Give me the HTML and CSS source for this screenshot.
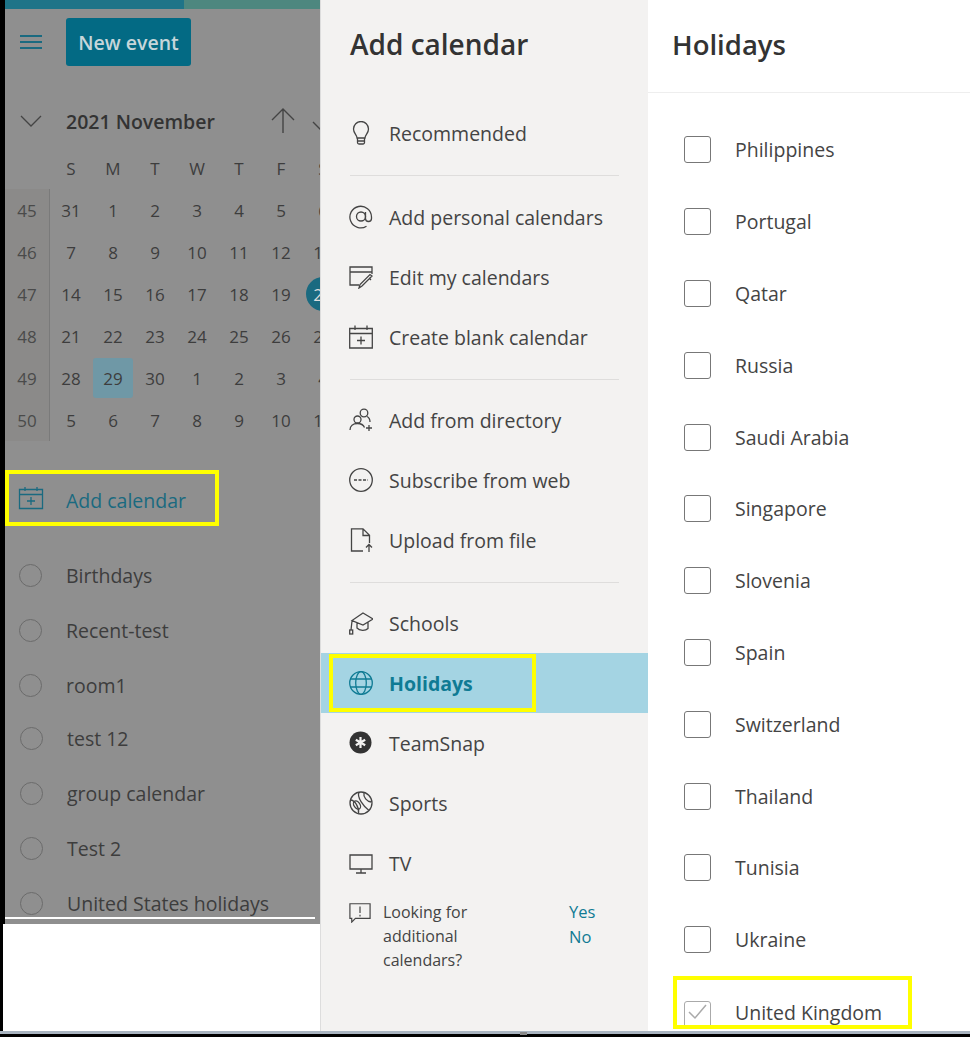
FILE: index.html
```html
<!DOCTYPE html>
<html lang="en">
<head>
    <meta charset="UTF-8">
    <title>Add calendar</title>
    <link rel="stylesheet" href="styles.css">
</head>
<body>
    <div class="window">
        <!-- left: dimmed calendar sidebar -->
        <div class="left">
            <div class="sidebar">
                <div class="topbar"><span class="topbar-a"></span><span class="topbar-b"></span></div>
                <div class="actions">
                    <svg class="burger" width="22" height="16" viewBox="0 0 22 16"><path d="M0 2h22M0 8h22M0 14h22" stroke="#1a6a80" stroke-width="2" fill="none"/></svg>
                    <button class="new-event">New event</button>
                </div>
                <div class="month-row">
                    <svg class="month-chev" width="22" height="12" viewBox="0 0 22 12"><path d="M1 1l10 10L21 1" stroke="#444" stroke-width="1.3" fill="none"/></svg>
                    <span class="month-name">2021 November</span>
                    <svg class="month-up" width="24" height="26" viewBox="0 0 24 26"><path d="M12 25V1M1 12L12 1l11 11" stroke="#444" stroke-width="1.4" fill="none"/></svg>
                    <svg class="month-down" width="24" height="26" viewBox="0 0 24 26"><path d="M12 1v24M1 14l11 11 11-11" stroke="#444" stroke-width="1.4" fill="none"/></svg>
                </div>
                <div class="cal-grid">
                    <span></span><b>S</b><b>M</b><b>T</b><b>W</b><b>T</b><b>F</b><b>S</b>
                    <i>45</i><span>31</span><span>1</span><span>2</span><span>3</span><span>4</span><span>5</span><span>6</span>
                    <i>46</i><span>7</span><span>8</span><span>9</span><span>10</span><span>11</span><span>12</span><span>13</span>
                    <i>47</i><span>14</span><span>15</span><span>16</span><span>17</span><span>18</span><span>19</span><span class="today">20</span>
                    <i>48</i><span>21</span><span>22</span><span>23</span><span>24</span><span>25</span><span>26</span><span>27</span>
                    <i>49</i><span>28</span><span class="picked">29</span><span>30</span><span>1</span><span>2</span><span>3</span><span>4</span>
                    <i>50</i><span>5</span><span>6</span><span>7</span><span>8</span><span>9</span><span>10</span><span>11</span>
                </div>
                <div class="add-cal mark">
                    <svg width="26" height="24" viewBox="0 0 26 24"><path d="M1.5 3.5h23v19h-23zM1.5 8.500h23M7 1v4M19 1v4M13 11v8M9 15h8" stroke="#1a6a80" stroke-width="1.300" fill="none"/></svg>
                    <span class="add-cal-text">Add calendar</span>
                </div>
                <div class="cal-lists">
                    <ul class="cal-list">
                        <li><span class="dot"></span>Birthdays</li>
                        <li><span class="dot"></span>Recent-test</li>
                        <li><span class="dot"></span>room1</li>
                    </ul>
                    <ul class="cal-list shifted">
                        <li><span class="dot"></span>test 12</li>
                        <li><span class="dot"></span>group calendar</li>
                        <li><span class="dot"></span>Test 2</li>
                        <li><span class="dot"></span>United States holidays</li>
                    </ul>
                </div>
            </div>
            <div class="blank"></div>
        </div>

        <!-- middle: add calendar menu -->
        <div class="menu">
            <h2 class="menu-title">Add calendar</h2>
            <div class="item">
                <svg class="ico" viewBox="0 0 24 24"><path d="M8 17c0-3-3.500-4.500-3.500-9a7.500 7.500 0 0 1 15 0c0 4.500-3.500 6-3.500 9zM8.500 17v4.500a1.500 1.500 0 0 0 1.500 1.500h4a1.500 1.500 0 0 0 1.500-1.500V17M8.500 20h7"/></svg>
                <span>Recommended</span>
            </div>
            <hr class="sep first">
            <div class="item">
                <svg class="ico" viewBox="0 0 24 24"><circle cx="12" cy="11.500" r="4.500"/><path d="M16.500 7v6.500a3 3 0 0 0 6 0V12a10.800 10.800 0 1 0-5 9.200"/></svg>
                <span>Add personal calendars</span>
            </div>
            <div class="item">
                <svg class="ico" viewBox="0 0 24 24"><path d="M10 20H1V2h22v7M1 7h22M23 11l-10 10-3 2 1-3.500 10-10zM20 13l2 2"/></svg>
                <span>Edit my calendars</span>
            </div>
            <div class="item">
                <svg class="ico" viewBox="0 0 24 24"><path d="M.700 3.500h22.600v19.500H.700zM.700 8.500h22.600M6 .5v4.500M18 .5v4.500M12 11.500v8M8 15.500h8"/></svg>
                <span>Create blank calendar</span>
            </div>
            <hr class="sep">
            <div class="item">
                <svg class="ico" viewBox="0 0 24 24"><circle cx="15" cy="5" r="3.800"/><circle cx="8.500" cy="11.500" r="3.500"/><path d="M1 22c0-4 3-6.500 7.500-6.500s6 1.500 7 4M18 8.500c2 1 3 3 3 5.500M20 17v6M17 20h6"/></svg>
                <span>Add from directory</span>
            </div>
            <div class="item">
                <svg class="ico" viewBox="0 0 24 24"><circle cx="12" cy="12" r="11.300"/><path d="M5 12h14" stroke-dasharray="3 1.500"/></svg>
                <span>Subscribe from web</span>
            </div>
            <div class="item">
                <svg class="ico" viewBox="0 0 24 24"><path d="M14 23H2.500V.8h11.500l6.500 6.500V15M14 1v6.500h6.500M20 24v-7M17 19.500l3-3 3 3"/></svg>
                <span>Upload from file</span>
            </div>
            <hr class="sep">
            <div class="item">
                <svg class="ico" viewBox="0 0 24 24"><path d="M14 2L24 8l-10 6L3 9.500zM8 12v5c2.500 3 8.500 3 11 .5V11M3 10l-1 9"/><rect x=".7" y="19" width="3" height="4"/></svg>
                <span>Schools</span>
            </div>
            <div class="item active">
                <div class="mark item-mark">
                    <svg class="ico" viewBox="0 0 24 24"><circle cx="12" cy="12" r="11.300"/><ellipse cx="12" cy="12" rx="5.300" ry="11.300"/><path d="M1 8h22M1 16h22"/></svg>
                    <span>Holidays</span>
                </div>
            </div>
            <div class="item">
                <svg class="ico" viewBox="0 0 24 24"><circle cx="11.500" cy="11.500" r="11" fill="#333" stroke="none"/><path d="M11.500 6v11M6.800 8.800l9.400 5.400M16.200 8.800l-9.400 5.400" stroke="#f3f2f1" stroke-width="2.200"/></svg>
                <span>TeamSnap</span>
            </div>
            <div class="item">
                <svg class="ico" viewBox="0 0 24 24"><circle cx="12" cy="12" r="11"/><path d="M10 1.500C7.500 6 15 16 20 19.500M15 1.500c-1 5 3 9 7 9.500M1.500 9c4 0 9 7 8 13.500"/><ellipse cx="8" cy="14" rx="3" ry="4.500" transform="rotate(-35 8 14)"/></svg>
                <span>Sports</span>
            </div>
            <div class="item">
                <svg class="ico" viewBox="0 0 24 24"><path d="M1 4h22v14H1zM12 18v4M7 22h10"/></svg>
                <span>TV</span>
            </div>
            <div class="feedback">
                <svg class="ico feedback-ico" viewBox="0 0 24 24"><path d="M1 3h22v16H7l-4 4v-4H1zM12 6v7M12 15v2"/></svg>
                <p class="feedback-text">Looking for additional calendars?</p>
                <div class="feedback-links"><a>Yes</a><a>No</a></div>
            </div>
        </div>

        <!-- right: holiday countries -->
        <div class="holidays">
            <h2 class="holidays-title">Holidays</h2>
            <ul class="country-list">
                <li><span class="box"></span>Philippines</li>
                <li><span class="box"></span>Portugal</li>
                <li><span class="box"></span>Qatar</li>
                <li><span class="box"></span>Russia</li>
                <li><span class="box"></span>Saudi Arabia</li>
                <li><span class="box"></span>Singapore</li>
                <li><span class="box"></span>Slovenia</li>
                <li><span class="box"></span>Spain</li>
                <li><span class="box"></span>Switzerland</li>
                <li><span class="box"></span>Thailand</li>
                <li><span class="box"></span>Tunisia</li>
                <li><span class="box"></span>Ukraine</li>
                <li class="mark country-mark">
                    <span class="box checked"><svg width="24" height="20" viewBox="0 0 24 20"><path d="M4 10l6 6L21 3" stroke="#aaa" stroke-width="1.500" fill="none"/></svg></span>United Kingdom
                </li>
            </ul>
        </div>
    </div>
    <div class="strip"><span class="strip-grip"></span></div>
</body>
</html>
```

FILE: styles.css
```css
:root {
    --teal: #0f7b94;
    --dim-teal: #1a6a80;
    --text: #444;
    --dim-text: #3d3d3d;
    --yellow: #ffff00;
    --menu-bg: #f3f2f1;
}
body {
    margin: 0;
    height: 1037px;
    overflow: hidden;
    background: #000;
    font-family: "Open Sans", "Noto Sans", Arial, sans-serif;
    color: var(--text);
}
ul {
    list-style: none;
    margin: 0;
    padding: 0;
}
h2 {
    margin: 0;
}
.window {
    display: flex;
    height: 1031px;
}
.strip {
    position: relative;
    height: 3px;
    background: #a9b4c0;
}
.strip-grip {
    position: absolute;
    left: 520px;
    top: 1px;
    width: 7px;
    height: 3px;
    background: #888;
}
.mark {
    border: 4px solid var(--yellow);
    box-sizing: border-box;
}

/* left column */
.left {
    width: 320px;
    flex-shrink: 0;
    display: flex;
    flex-direction: column;
    background: #000;
}
.sidebar {
    height: 924px;
    margin-left: 5px;
    background: #8f8f8f;
    overflow: hidden;
    flex-shrink: 0;
}
.blank {
    flex: 1;
    margin-left: 3px;
    background: #fff;
}
.topbar {
    display: flex;
    height: 9px;
}
.topbar-a {
    width: 179px;
    background: #1f7488;
}
.topbar-b {
    flex: 1;
    background: #4d877f;
}
.actions {
    display: flex;
    align-items: center;
    height: 66px;
    padding-left: 15px;
    box-sizing: border-box;
}
.burger {
    margin-right: 24px;
}
.new-event {
    width: 125px;
    height: 48px;
    border: none;
    border-radius: 3px;
    background: #036a84;
    color: #c6d6da;
    font: 600 19.500px "Open Sans", sans-serif;
    padding: 0;
}
.month-row {
    display: flex;
    align-items: center;
    height: 40px;
    margin-top: 26px;
    padding-left: 15px;
    white-space: nowrap;
}
.month-chev {
    margin-right: 23px;
    flex-shrink: 0;
}
.month-name {
    width: 206px;
    flex-shrink: 0;
    font-size: 19.500px;
    font-weight: 600;
    color: #333;
    padding-left: 1px;
    box-sizing: border-box;
}
.month-down {
    margin-left: 17px;
    flex-shrink: 0;
}
.month-up {
    flex-shrink: 0;
}
.cal-grid {
    display: grid;
    grid-template-columns: 45px repeat(7, 42px);
    grid-auto-rows: 42px;
    margin-top: 6px;
    font-size: 17px;
    color: var(--dim-text);
    width: 339px;
}
.cal-grid > * {
    display: flex;
    align-items: center;
    justify-content: center;
    font-style: normal;
    font-weight: 400;
}
.cal-grid i {
    background: #8b8a89;
    border-right: 1px solid #7a7a7a;
    color: #4a4a4a;
}
.cal-grid .picked {
    margin: 1px;
    background: #6f98a6;
    border-radius: 3px;
}
.cal-grid .today {
    background: var(--dim-teal);
    color: #ddd;
    border-radius: 50%;
    width: 34px;
    height: 34px;
    margin: 4px;
}
.add-cal {
    display: flex;
    align-items: center;
    width: 214px;
    height: 56px;
    margin-top: 29px;
    padding-left: 9px;
    color: var(--dim-teal);
    font-size: 19.500px;
}
.add-cal svg {
    margin-right: 22px;
}
.add-cal-text {
    margin-top: 5px;
}
.cal-lists {
    height: 371px;
    margin-top: 22px;
    margin-right: 5px;
    border-bottom: 2px solid #fff;
    overflow: hidden;
    box-sizing: border-box;
}
.cal-list li {
    display: flex;
    align-items: center;
    height: 55px;
    padding-left: 14px;
    font-size: 19.500px;
    color: var(--dim-text);
    white-space: nowrap;
}
.cal-list.shifted {
    margin-top: -2px;
    padding-left: 1px;
}
.dot {
    width: 21px;
    height: 21px;
    margin-right: 24px;
    border: 1.500px solid #6b6b6b;
    border-radius: 50%;
    flex-shrink: 0;
}

/* middle column */
.menu {
    width: 328px;
    flex-shrink: 0;
    background: var(--menu-bg);
    box-sizing: border-box;
    border-left: 1px solid #ddd;
}
.menu-title {
    height: 103px;
    padding: 24px 0 0 29px;
    box-sizing: border-box;
    font-size: 28px;
    font-weight: 600;
    line-height: 40px;
    color: #333;
}
.item {
    display: flex;
    align-items: center;
    height: 60px;
    padding-left: 28px;
    font-size: 19.500px;
    white-space: nowrap;
}
.ico {
    width: 24px;
    height: 24px;
    margin-right: 16px;
    flex-shrink: 0;
    fill: none;
    stroke: #444;
    stroke-width: 1.300;
}
.sep {
    margin: 12px 29px 10px;
    border: none;
    border-top: 1px solid #dedddc;
}
.sep.first {
    margin-bottom: 11px;
}
.item.active {
    padding-left: 8px;
    background: #a4d4e3;
    color: var(--teal);
    font-weight: 700;
}
.item.active .ico {
    stroke: var(--teal);
}
.item-mark {
    display: flex;
    align-items: center;
    width: 207px;
    height: 58px;
    padding-left: 16px;
}
.feedback {
    display: flex;
    padding: 7px 0 0 28px;
}
.feedback-ico {
    width: 22px;
    height: 22px;
    margin: 1px 12px 0 0;
}
.feedback-text {
    width: 186px;
    margin: 0;
    font-size: 16px;
    line-height: 24px;
    padding-right: 80px;
    box-sizing: border-box;
}
.feedback-links {
    display: flex;
    flex-direction: column;
    margin-top: -1px;
    font-size: 16.500px;
    line-height: 25px;
    color: var(--teal);
}

/* right column */
.holidays {
    flex: 1;
    background: #fff;
    overflow: hidden;
}
.holidays-title {
    height: 93px;
    padding: 25px 0 0 24px;
    box-sizing: border-box;
    border-bottom: 1px solid #eee;
    font-size: 27.500px;
    font-weight: 600;
    line-height: 40px;
    color: #333;
}
.country-list {
    padding-top: 21px;
}
.country-list li {
    display: flex;
    align-items: center;
    height: 71.800px;
    padding-left: 36px;
    font-size: 19.500px;
    white-space: nowrap;
}
.box {
    width: 27px;
    height: 27px;
    margin-right: 24px;
    border: 1.500px solid #777;
    border-radius: 3px;
    box-sizing: border-box;
    flex-shrink: 0;
}
.country-list .country-mark {
    width: 239px;
    height: 53px;
    margin-left: 25px;
    padding: 20px 0 0 7px;
    overflow: hidden;
}
.box.checked {
    margin-top: 2px;
    margin-bottom: -2px;
    border-color: #aaa;
}
.box.checked svg {
    display: block;
}
```
